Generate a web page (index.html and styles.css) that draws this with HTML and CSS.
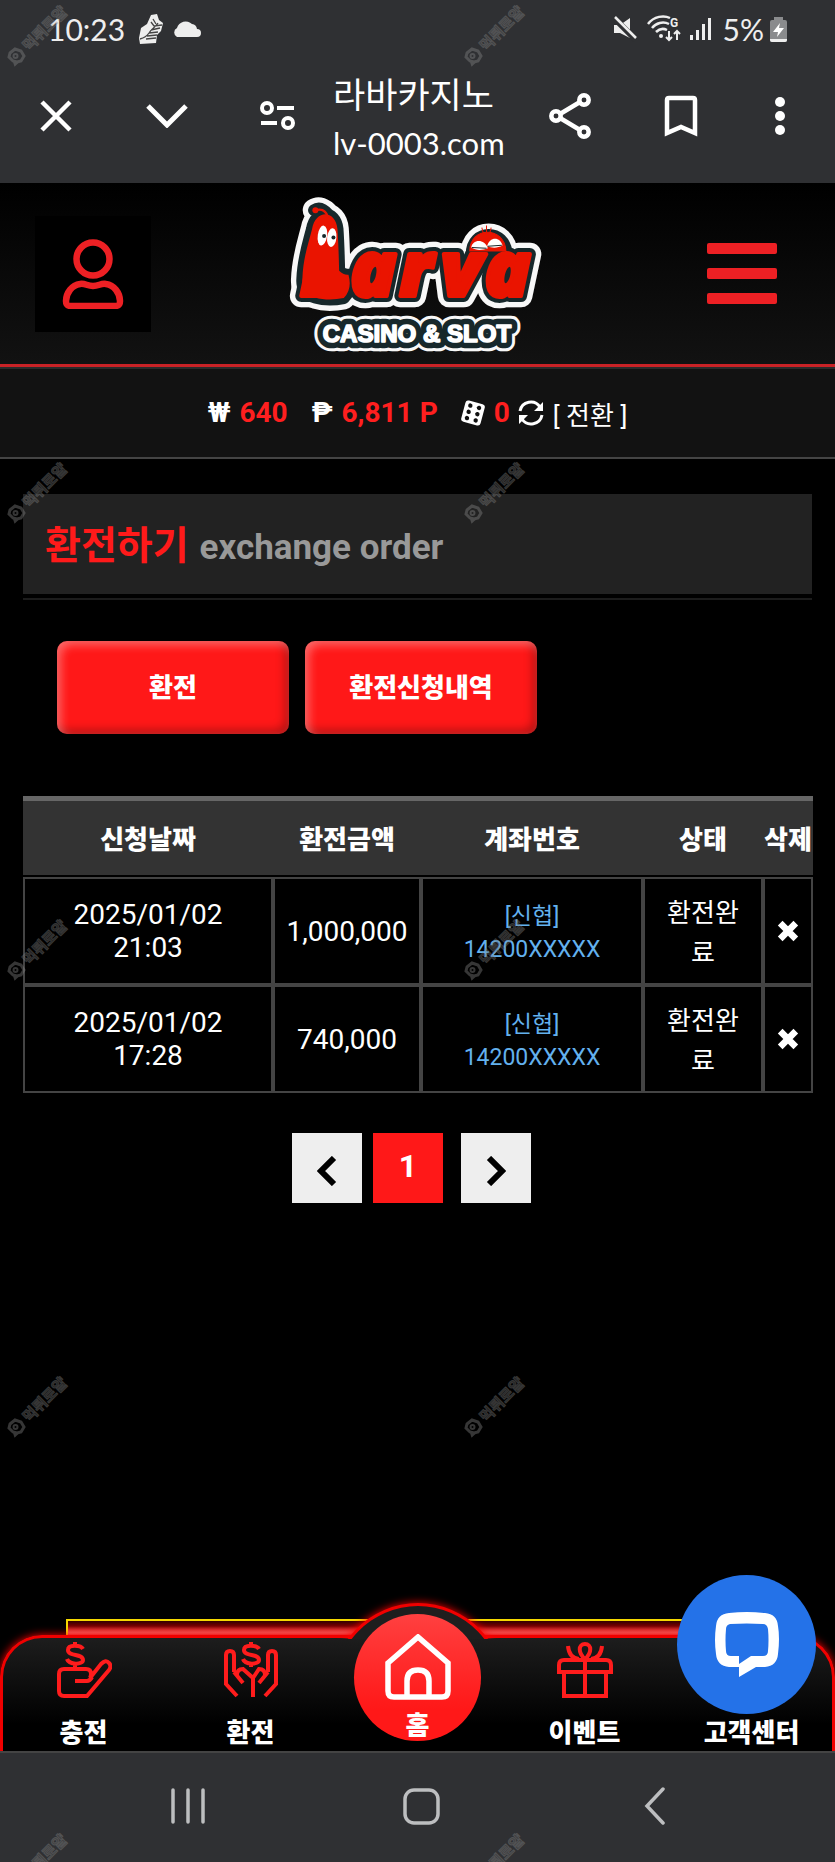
FILE: index.html
```html
<!DOCTYPE html>
<html lang="ko">
<head>
<meta charset="utf-8">
<meta name="viewport" content="width=device-width, initial-scale=1">
<title>라바카지노</title>
<link rel="stylesheet" href="styles.css">
</head>
<body>
<div class="screen">
  <header class="chrome">
    <div class="status">
      <span class="status-time">10:23</span>
      <svg class="ico-shoe" width="24" height="30" viewBox="0 0 24 30"><path d="M12 1l6-1 2 6 4 3-2 8-4 4-1 8-16 1-1-6 2-10 6-4z" fill="#eee"/><path d="M19 9c-3 5-6 5-9 10-2 3-5 5-9 6M10 19l9-1M8 22l10-1M7 25l10-1M12 16l9-2M14 5l3 5M12 8l3 4M15 12l8-1" stroke="#444" stroke-width="1.3" fill="none"/></svg>
      <svg class="ico-cloud" width="30" height="18" viewBox="0 0 30 18"><path d="M5 17a5 5 0 0 1 0-9A9 9 0 0 1 20 4a6 6 0 0 1 5 5 4 4 0 0 1 0 8z" fill="#eee"/></svg>
      <span class="grow"></span>
      <svg width="24" height="26" viewBox="0 0 24 26"><path d="M1 9h6l10-7v20L7 17H1z" fill="#eee"/><path d="M1 2l22 22" stroke="#2f3033" stroke-width="6"/><path d="M2 1l21 21" stroke="#eee" stroke-width="2.5"/></svg>
      <svg class="ico-wifi" width="36" height="28" viewBox="0 0 36 28"><g fill="none" stroke="#eee" stroke-width="2.5"><path d="M1 9C7 1 17 0 23 3M5 13c4-5 11-7 17-4M9 17c3-3 7-4 11-2"/><path d="M22 16v9M19 22l3 3 3-3M30 25v-9M27 19l3-3 3 3" stroke-width="2"/></g><circle cx="14" cy="21" r="2" fill="#eee"/><text x="23" y="12" class="wifi-g">G</text></svg>
      <svg class="ico-signal" width="22" height="24" viewBox="0 0 22 24"><path d="M1.500 18v5M7.500 13v10M13.500 7v16M19.500 1v22" stroke="#eee" stroke-width="3"/></svg>
      <span class="status-pct">5%</span>
      <svg width="17" height="25" viewBox="0 0 17 25"><path d="M4 0h9v3h2q2 0 2 2v18q0 2-2 2H2q-2 0-2-2V5q0-2 2-2h2z" fill="#8a8b8d"/><path d="M0 22h17v1q0 2-2 2H2q-2 0-2-2z" fill="#eee"/><path d="M10 6l-7 9h5l-1 5 7-9H9z" fill="#fff"/></svg>
    </div>
    <div class="toolbar">
      <button class="tool" aria-label="닫기"><svg width="32" height="32" viewBox="0 0 32 32"><path d="M2 2l28 28M30 2L2 30" stroke="#fff" stroke-width="4.500"/></svg></button>
      <button class="tool" aria-label="접기"><svg width="42" height="24" viewBox="0 0 42 24"><path d="M2 2l19 19L40 2" fill="none" stroke="#fff" stroke-width="5"/></svg></button>
      <button class="tool" aria-label="사이트 설정"><svg width="36" height="30" viewBox="0 0 36 30"><g fill="none" stroke="#fff" stroke-width="4"><circle cx="7" cy="7" r="5"/><circle cx="28" cy="22" r="5"/><path d="M17 7h17M1 22h16"/></g></svg></button>
      <div class="site"><span class="site-name">라바카지노</span><span class="site-url">lv-0003.com</span></div>
      <button class="tool" aria-label="공유"><svg width="42" height="46" viewBox="0 0 42 46"><g fill="none" stroke="#fff" stroke-width="4.500"><circle cx="35" cy="7" r="4.700"/><circle cx="7" cy="23" r="4.700"/><circle cx="35" cy="39" r="4.700"/><path d="M11 21l20-12M11 25l20 12"/></g></svg></button>
      <button class="tool" aria-label="북마크"><svg width="34" height="42" viewBox="0 0 34 42"><path d="M3 38V5q0-2 2-2h24q2 0 2 2v33l-14-6z" fill="none" stroke="#fff" stroke-width="4.500"/></svg></button>
      <button class="tool tool-more" aria-label="더보기"><svg width="10" height="38" viewBox="0 0 10 38"><g fill="#fff"><circle cx="5" cy="5" r="5"/><circle cx="5" cy="19" r="5"/><circle cx="5" cy="33" r="5"/></g></svg></button>
    </div>
  </header>

  <div class="brandbar">
    <button class="profile" aria-label="내 정보"><svg width="62" height="70" viewBox="0 0 62 70"><g fill="none" stroke="#ed2024" stroke-width="6.500"><circle cx="31" cy="20" r="16.500"/><path d="M18 45c5-1 7 2 13 2s8-3 13-2c8 1 14 9 14 17 0 4-1 5-5 5H9c-4 0-5-1-5-5 0-8 6-16 14-17z"/></g></svg></button>
    <a class="logo" href="#" aria-label="Larva Casino &amp; Slot">
      <svg width="264" height="164" viewBox="50 30 790 490">
        <g class="rim rim-white">
          <text class="word" x="92 242 390 512 644" y="342">Larva</text>
          <path d="M128 140c10-58 70-58 76 0 3 45 4 85 5 125q14 14 28 12 12 44-14 70c-30 6-60 6-86-2-30-8-40-30-38-55 2-60 16-100 29-150zM134 84q20-14 44 14M606 215c0-76 100-76 104 0z"/>
          <text class="tag" x="160" y="480">CASINO &amp; SLOT</text>
        </g>
        <g class="rim rim-dark">
          <text class="word" x="92 242 390 512 644" y="342">Larva</text>
          <path d="M128 140c10-58 70-58 76 0 3 45 4 85 5 125q14 14 28 12 12 44-14 70c-30 6-60 6-86-2-30-8-40-30-38-55 2-60 16-100 29-150zM134 84q20-14 44 14M606 215c0-76 100-76 104 0z"/>
        </g>
        <text class="tag tag-dark" x="160" y="480">CASINO &amp; SLOT</text>
        <path d="M600 206c0-75 105-75 108 0zM640 152l-4-16M650 150v-20M660 152l4-16" fill="#ea1400" stroke="#ea1400" stroke-width="3"/>
        <g class="word-face"><text class="word" x="92 242 390 512 644" y="342">Larva</text></g>
        <path d="M128 140c10-58 70-58 76 0 3 45 4 85 5 125q14 14 28 12 12 44-14 70c-30 6-60 6-86-2-30-8-40-30-38-55 2-60 16-100 29-150z" fill="#ea1400"/>
        <path d="M138 84q30-8 38 22" fill="none" stroke="#ea1400" stroke-width="7"/><circle cx="138" cy="84" r="9" fill="#ea1400"/>
        <g fill="#fff"><ellipse cx="159" cy="160" rx="14" ry="30" transform="rotate(8 159 160)"/><ellipse cx="187" cy="166" rx="14" ry="28" transform="rotate(6 187 166)"/><path d="M604 196c4-26 40-28 50 2-16 6-34 8-50-2zM652 192c6-30 40-30 46-2-14 8-32 8-46 2z"/></g>
        <g fill="#17282b"><circle cx="164" cy="161" r="6"/><circle cx="192" cy="166" r="6"/></g>
        <path d="M606 196l44 2M654 192l42-3" stroke="#17282b" stroke-width="3"/>
        <text class="tag tag-face" x="160" y="480">CASINO &amp; SLOT</text>
      </svg>
    </a>
    <button class="menu" aria-label="메뉴"><span></span><span></span><span></span></button>
  </div>

  <div class="balance">
    <span class="coin">₩</span><b class="amount">640</b>
    <span class="coin coin-next">₱</span><b class="amount">6,811 P</b>
    <svg class="dice" width="26" height="26" viewBox="0 0 26 26"><g transform="rotate(15 13 13)"><rect x="3" y="2" width="20" height="22" rx="3" fill="#fff"/><g fill="#111"><circle cx="8.500" cy="6.500" r="2.200"/><circle cx="8.500" cy="13" r="2.200"/><circle cx="8.500" cy="19.500" r="2.200"/><circle cx="17.500" cy="6.500" r="2.200"/><circle cx="17.500" cy="13" r="2.200"/><circle cx="17.500" cy="19.500" r="2.200"/></g></g></svg>
    <b class="amount">0</b>
    <a class="convert" href="#"><svg width="26" height="26" viewBox="0 0 26 26"><g fill="none" stroke="#fff" stroke-width="3"><path d="M2 11A11 11 0 0 1 22 7M24 15A11 11 0 0 1 4 19"/></g><path d="M25 2v9h-9zM1 24v-9h9z" fill="#fff"/></svg><span>[ 전환 ]</span></a>
  </div>

  <main class="content">
    <div class="title-wrap"><h1 class="title">환전하기 <small>exchange order</small></h1></div>
    <div class="actions">
      <button class="action">환전</button>
      <button class="action">환전신청내역</button>
    </div>
    <table class="orders">
      <colgroup><col class="c-date"><col class="c-sum"><col class="c-acct"><col class="c-state"><col class="c-del"></colgroup>
      <thead><tr><th>신청날짜</th><th>환전금액</th><th>계좌번호</th><th>상태</th><th>삭제</th></tr></thead>
      <tbody>
        <tr><td>2025/01/02 21:03</td><td>1,000,000</td><td class="acct">[신협]<br>14200XXXXX</td><td class="state">환전완료</td><td><button class="del" aria-label="삭제"><svg width="24" height="24" viewBox="0 0 20 20"><path d="M3.500 3.500l13 13M16.500 3.500l-13 13" stroke="#fff" stroke-width="5.500"/></svg></button></td></tr>
        <tr><td>2025/01/02 17:28</td><td>740,000</td><td class="acct">[신협]<br>14200XXXXX</td><td class="state">환전완료</td><td><button class="del" aria-label="삭제"><svg width="24" height="24" viewBox="0 0 20 20"><path d="M3.500 3.500l13 13M16.500 3.500l-13 13" stroke="#fff" stroke-width="5.500"/></svg></button></td></tr>
      </tbody>
    </table>
    <nav class="pager" aria-label="페이지">
      <a class="prev" href="#" aria-label="이전"><svg width="20" height="30" viewBox="0 0 20 30"><path d="M17 2L4 15l13 13" fill="none" stroke="#000" stroke-width="6"/></svg></a>
      <a class="current" href="#">1</a>
      <a class="next" href="#" aria-label="다음"><svg width="20" height="30" viewBox="0 0 20 30"><path d="M3 2l13 13L3 28" fill="none" stroke="#000" stroke-width="6"/></svg></a>
    </nav>
  </main>

  <div class="dock">
    <div class="banner"></div>
    <nav class="tabs">
      <div class="bump"></div>
      <a class="tab" href="#"><svg width="56" height="56" viewBox="0 0 56 56"><g fill="none" stroke="#ff1c1c" stroke-width="4"><path d="M27 7c-2-4-15-5-15 1 0 7 15 3 15 10 0 5-14 5-16-1M19 0v4M19 22v5"/><path d="M19 39h12q3 0 5-4M3 32q0-5 5-5h22q5 0 5 5 0 2-1 4l11-14q5-5 8-1 3 3 0 7L31 54H8q-5 0-5-5z"/></g></svg><span>충전</span></a>
      <a class="tab" href="#"><svg width="56" height="56" viewBox="0 0 56 56"><g fill="none" stroke="#ff1c1c" stroke-width="4"><path d="M36 7c-2-4-15-5-15 1 0 7 15 3 15 10 0 5-14 5-16-1M28 0v4M28 20v5"/><path d="M14 54L3 42V13q0-4 4-4t4 4v17M11 30l9 11M42 54l11-12V13q0-4-4-4t-4 4v17M45 30l-9 11M14 33q0-6 6-6l10 9v19M42 33q0-6-6-6l-6 9"/></g></svg><span>환전</span></a>
      <a class="tab tab-home" href="#"><span class="orb"><svg width="66" height="66" viewBox="0 0 66 66"><path d="M3 29L33 3l30 26v28q0 6-6 6H9q-6 0-6-6zM22 63V47q0-11 11-11t11 11v16" fill="none" stroke="#fff" stroke-width="5.500"/></svg><span>홈</span></span></a>
      <a class="tab" href="#"><svg width="56" height="56" viewBox="0 0 56 56"><g fill="none" stroke="#ff1c1c" stroke-width="4"><path d="M2 30v-7q0-5 5-5h42q5 0 5 5v7zM7 30v24h42V30M28 18v36M28 17c-7-6-7-15 0-15s7 9 0 15M11 4q1 12 11 13M45 4q-1 12-11 13"/></g></svg><span>이벤트</span></a>
      <a class="tab" href="#"><i class="blank"></i><span>고객센터</span></a>
    </nav>
    <button class="chat" aria-label="채팅"><svg width="66" height="66" viewBox="0 0 66 66"><path fill-rule="evenodd" fill="#fff" d="M15 1q18-2 36 0 12 1 13 13 2 12 0 28-1 12-13 13h-9L25 65V55H15Q3 54 2 42 0 28 2 14 3 2 15 1zm1 11q-4 1-4 5-1 11 0 22 0 5 5 5h8v8l12-8h12q5 0 5-5 1-11 0-22-1-5-5-5-16-1-33 0z"/></svg></button>
  </div>

  <footer class="sysnav">
    <button aria-label="최근 앱"><svg width="34" height="36" viewBox="0 0 34 36"><path d="M2 2v32M17 2v32M32 2v32" stroke="#bdbec0" stroke-width="3.500" stroke-linecap="round"/></svg></button>
    <button aria-label="홈 화면"><svg width="38" height="38" viewBox="0 0 38 38"><rect x="3" y="3" width="33" height="33" rx="9" fill="none" stroke="#bdbec0" stroke-width="3.500"/></svg></button>
    <button aria-label="뒤로"><svg width="22" height="38" viewBox="0 0 22 38"><path d="M19 2L3 19l16 17" fill="none" stroke="#bdbec0" stroke-width="3.500" stroke-linecap="round"/></svg></button>
  </footer>

  <div class="marks" aria-hidden="true">
    <svg width="0" height="0"><defs><g id="mark" fill="none" stroke="#888"><path d="M10 51l5-4 6 2 3 5-3 5-4 1-4-1-4-4z" stroke-width="3"/><circle cx="15.500" cy="54" r="2" stroke-width="2"/><path d="M14 60l1 3 3-3" stroke-width="2"/></g></defs></svg>
    <div class="mark"><svg width="70" height="70"><use href="#mark"/><text x="29" y="50" transform="rotate(-45 29 50)">먹튀로얄</text></svg></div>
    <div class="mark"><svg width="70" height="70"><use href="#mark"/><text x="29" y="50" transform="rotate(-45 29 50)">먹튀로얄</text></svg></div>
    <div class="mark"><svg width="70" height="70"><use href="#mark"/><text x="29" y="50" transform="rotate(-45 29 50)">먹튀로얄</text></svg></div>
    <div class="mark"><svg width="70" height="70"><use href="#mark"/><text x="29" y="50" transform="rotate(-45 29 50)">먹튀로얄</text></svg></div>
    <div class="mark"><svg width="70" height="70"><use href="#mark"/><text x="29" y="50" transform="rotate(-45 29 50)">먹튀로얄</text></svg></div>
    <div class="mark"><svg width="70" height="70"><use href="#mark"/><text x="29" y="50" transform="rotate(-45 29 50)">먹튀로얄</text></svg></div>
    <div class="mark"><svg width="70" height="70"><use href="#mark"/><text x="29" y="50" transform="rotate(-45 29 50)">먹튀로얄</text></svg></div>
    <div class="mark"><svg width="70" height="70"><use href="#mark"/><text x="29" y="50" transform="rotate(-45 29 50)">먹튀로얄</text></svg></div>
    <div class="mark"><svg width="70" height="70"><use href="#mark"/><text x="29" y="50" transform="rotate(-45 29 50)">먹튀로얄</text></svg></div>
    <div class="mark"><svg width="70" height="70"><use href="#mark"/><text x="29" y="50" transform="rotate(-45 29 50)">먹튀로얄</text></svg></div>
  </div>
</div>
</body>
</html>
```
FILE: styles.css
```css
* { box-sizing: border-box; }

body {
  margin: 0;
  background: #000;
  color: #fff;
  font-family: Roboto, "Noto Sans CJK KR", sans-serif;
}

button {
  border: 0;
  padding: 0;
  background: none;
  color: inherit;
  font: inherit;
}

a { color: inherit; text-decoration: none; }
svg { display: block; flex: none; }

.screen {
  position: relative;
  display: flex;
  flex-direction: column;
  min-height: 100vh;
  overflow: hidden;
}

/* Browser chrome */
.chrome { background: #2f3033; }

.status {
  display: flex;
  align-items: center;
  height: 58px;
  padding: 0 48px;
  color: #eee;
  font: 30px/32px Lato, sans-serif;
}
.ico-shoe { margin-left: 14px; }
.ico-cloud { margin-left: 9px; }
.grow { flex: 1; }
.ico-wifi { margin-left: 10px; }
.ico-signal { margin-left: 7px; }
.status-pct { margin: 0 6px 0 11px; }
.wifi-g { font: bold 12px Roboto, sans-serif; fill: #eee; }

.toolbar { display: flex; height: 125px; padding: 0 12px 9px 0; align-items: center; }
.tool { display: grid; place-items: center; width: 111px; height: 80px; }
.tool-more { width: 87px; }
.site { flex: 1; min-width: 0; display: flex; flex-direction: column; padding-top: 4px; white-space: nowrap; }
.site-name { font: 35px/50px "Noto Sans CJK KR", sans-serif; }
.site-url { font: 31px/50px Lato, sans-serif; }

/* Brand header */
.brandbar {
  display: grid;
  grid-template-columns: 1fr auto 1fr;
  align-items: center;
  height: 184px;
  padding: 0 58px 0 35px;
  background: linear-gradient(#000, #121212);
  border-bottom: 3px solid #c92226;
}
.profile { display: grid; place-items: center; width: 116px; height: 116px; background: #000; }
.logo { margin-left: 24px; }
.menu { justify-self: end; display: grid; gap: 14px; width: 70px; }
.menu span { height: 11px; border-radius: 2px; background: #ed2024; }

.word { font: italic 800 228px "Open Sans", sans-serif; }
.tag { font: bold 72px "Liberation Sans", sans-serif; }
.rim { stroke-linejoin: round; stroke-linecap: round; }
.rim-white { fill: #f8f8f8; stroke: #f8f8f8; stroke-width: 68px; }
.rim-white .tag { stroke-width: 56px; }
.rim-dark { fill: #17282b; stroke: #17282b; stroke-width: 36px; }
.word-face { fill: #ea1400; stroke: #ea1400; stroke-width: 12px; stroke-linejoin: round; }
.tag-dark { fill: #17282b; stroke: #17282b; stroke-width: 38px; stroke-linejoin: round; }
.tag-face { fill: #fff; stroke: #fff; stroke-width: 5px; stroke-linejoin: round; }

/* Balance row */
.balance {
  display: flex;
  align-items: center;
  justify-content: center;
  height: 92px;
  border-top: 2px solid #2b2b2b;
  border-bottom: 2px solid #444;
  background: #121212;
  font-size: 28px;
  line-height: 32px;
}
.coin { margin-right: 9px; font-weight: 700; }
.coin-next { margin-left: 24px; }
.amount { color: #ff1f1f; }
.dice { margin: 0 8px 0 22px; }
.convert { display: flex; align-items: center; gap: 9px; margin-left: 8px; font-size: 26px; }
.convert span { padding-top: 5px; }

/* Page content */
.content { flex: 1; padding: 35px 23px 0; }
.title-wrap { padding-bottom: 4px; border-bottom: 2px solid #1c1c1c; }
.title {
  display: flex;
  align-items: baseline;
  gap: 11px;
  height: 100px;
  margin: 0;
  padding: 26px 22px 0;
  background: #222;
  color: #ff1a1a;
  font: bold 39px/52px Roboto, "Noto Sans CJK KR", sans-serif;
}
.title small { color: #999; font-size: 35px; }

.actions { display: flex; gap: 16px; padding: 41px 34px 62px; }
.action {
  width: 232px;
  height: 93px;
  padding-bottom: 5px;
  border-radius: 10px;
  background: #ff1818;
  box-shadow: inset 4px 4px 10px rgba(255, 255, 255, .35), inset -4px -4px 10px rgba(0, 0, 0, .3);
  font-size: 26px;
  font-weight: 900;
}

.orders {
  width: 100%;
  border-spacing: 0;
  table-layout: fixed;
  border-top: 5px solid #666;
  text-align: center;
}
.c-date { width: 250px; }
.c-sum { width: 148px; }
.c-acct { width: 222px; }
.c-state { width: 120px; }
.c-del { width: 50px; }
.orders th {
  height: 76px;
  padding: 0 0 2px;
  border-bottom: 2px solid #000;
  background: #333;
  font-size: 26px;
  font-weight: 900;
  white-space: nowrap;
}
.orders td {
  height: 108px;
  padding: 0 10px;
  border: 2px solid #444;
  font-size: 28px;
  line-height: 33px;
}
.orders td:first-child { padding: 0 40px; }
.orders td:last-child { padding: 0; }
.orders td.acct { padding-top: 4px; color: #63b1ee; font-size: 23px; }
.orders td.state { padding: 4px 20px 0; font-size: 26px; line-height: 40px; word-break: break-all; }
.del { display: grid; place-items: center; width: 100%; height: 40px; }

.pager { display: flex; justify-content: center; gap: 11px; padding: 40px 12px 24px 0; }
.pager a {
  display: grid;
  place-items: center;
  width: 70px;
  height: 70px;
  padding-top: 6px;
  background: #eee;
  font-size: 32px;
  font-weight: 700;
}
.pager .current { padding: 0 0 4px; background: #ff1818; }
.pager .next { margin-left: 7px; }

/* Bottom dock */
.dock { position: relative; z-index: 0; }
.banner {
  position: absolute;
  z-index: -1;
  top: -16px;
  left: 66px;
  right: 66px;
  height: 40px;
  border: 2px solid #f5d800;
  background: linear-gradient(#300 0, #700 5px, #d33 9px, #e66 12px, #d00 18px);
}
.tabs {
  position: relative;
  display: grid;
  grid-template-columns: repeat(5, 1fr);
  height: 119px;
  margin-bottom: -3px;
  border-radius: 42px 42px 0 0;
  background: linear-gradient(#1e1e1e, #000 75%);
  box-shadow: inset 0 0 0 3px #f00000, 0 0 9px #f00;
}
.bump {
  position: absolute;
  top: -32px;
  left: 50%;
  width: 176px;
  height: 36px;
  margin-left: -88px;
  clip-path: inset(-20px 0 0 0);
}
.bump::before {
  content: "";
  display: block;
  height: 176px;
  border: 3px solid #f00000;
  border-radius: 50%;
  background: #1e1e1e;
  box-shadow: 0 0 9px #f00;
}
.tab {
  position: relative;
  display: flex;
  flex-direction: column;
  align-items: center;
  gap: 16px;
  padding-top: 7px;
  font-size: 26px;
  line-height: 38px;
  font-weight: 900;
}
.blank { height: 56px; }
.orb {
  position: absolute;
  top: -21px;
  display: flex;
  flex-direction: column;
  align-items: center;
  gap: 7px;
  width: 127px;
  height: 127px;
  padding-top: 20px;
  border-radius: 50%;
  background: linear-gradient(#ff4040, #ff1818 75%);
}
.chat {
  position: absolute;
  right: 19px;
  bottom: 37px;
  display: grid;
  place-items: center;
  width: 139px;
  height: 139px;
  border-radius: 50%;
  background: #2472e8;
}

/* System navigation */
.sysnav {
  position: relative;
  z-index: 1;
  display: grid;
  grid-template-columns: repeat(3, 1fr);
  height: 111px;
  padding: 0 63px 4px 71px;
  border-top: 2px solid #444;
  background: #2f3033;
}
.sysnav button { display: grid; place-items: center; }

/* Repeating watermark */
.marks {
  position: absolute;
  z-index: 2;
  inset: 0;
  display: grid;
  grid-template-columns: 457px 1fr;
  grid-auto-rows: 457px;
  padding-top: 2px;
  overflow: hidden;
  opacity: .4;
  pointer-events: none;
}
.marks > svg { position: absolute; }
.mark text { font: bold 15px "Noto Sans CJK KR", sans-serif; fill: #555; stroke: #888; stroke-width: 1px; }
```
